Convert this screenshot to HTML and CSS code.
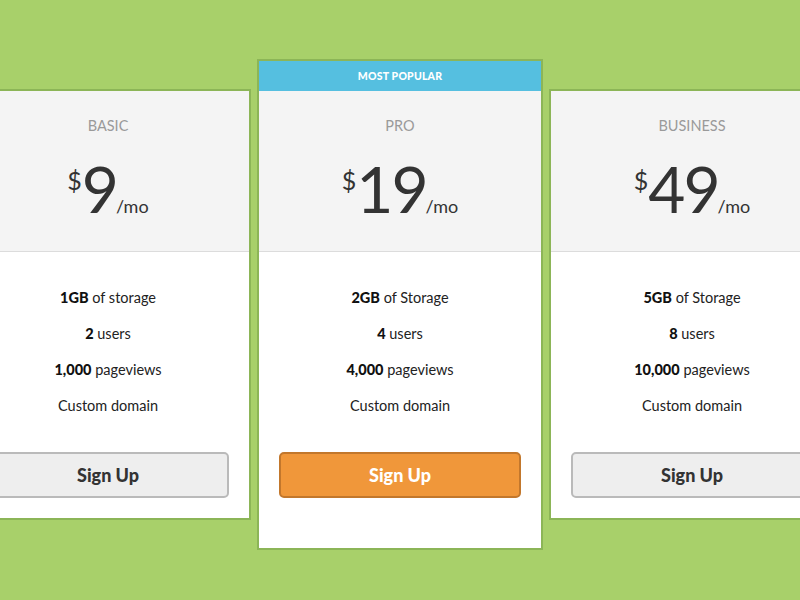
FILE: index.html
```html
<!DOCTYPE html>
<html>
<head>
<meta charset="utf-8">
<link rel="stylesheet" href="styles.css">
</head>
<body>
<div class="plans">
  <div class="card">
    <div class="head">
      <div class="name">BASIC</div>
      <div class="price"><span class="cur">$</span><span class="amt">9</span><span class="per">/mo</span></div>
    </div>
    <div class="body">
      <ul class="features">
        <li><b>1GB</b> of storage</li>
        <li><b>2</b> users</li>
        <li><b>1,000</b> pageviews</li>
        <li>Custom domain</li>
      </ul>
      <button class="btn">Sign Up</button>
    </div>
  </div>
  <div class="card popular">
    <div class="badge">MOST POPULAR</div>
    <div class="head">
      <div class="name">PRO</div>
      <div class="price"><span class="cur">$</span><span class="amt">19</span><span class="per">/mo</span></div>
    </div>
    <div class="body">
      <ul class="features">
        <li><b>2GB</b> of Storage</li>
        <li><b>4</b> users</li>
        <li><b>4,000</b> pageviews</li>
        <li>Custom domain</li>
      </ul>
      <button class="btn primary">Sign Up</button>
    </div>
  </div>
  <div class="card">
    <div class="head">
      <div class="name">BUSINESS</div>
      <div class="price"><span class="cur">$</span><span class="amt">49</span><span class="per">/mo</span></div>
    </div>
    <div class="body">
      <ul class="features">
        <li><b>5GB</b> of Storage</li>
        <li><b>8</b> users</li>
        <li><b>10,000</b> pageviews</li>
        <li>Custom domain</li>
      </ul>
      <button class="btn">Sign Up</button>
    </div>
  </div>
</div>
</body>
</html>
```
FILE: styles.css
```css
html, body {
  margin: 0;
  padding: 0;
  width: 800px;
  height: 600px;
  overflow: hidden;
  background: #a8d06a;
  font-family: Lato, "Open Sans", sans-serif;
}
.plans {
  display: flex;
  justify-content: center;
  align-items: center;
  gap: 6px;
  height: 608px;
}
.card {
  flex: 0 0 286px;
  box-sizing: border-box;
  background: #fff;
  border: 2px solid #8cb557;
  display: flex;
  flex-direction: column;
}
.badge {
  height: 30px;
  background: #55bfe0;
  color: #fff;
  font-weight: 900;
  font-size: 10.5px;
  letter-spacing: 0.2px;
  display: flex;
  align-items: center;
  justify-content: center;
}
.head {
  height: 160px;
  background: #f4f4f4;
  border-bottom: 1px solid #dcdcdc;
  display: flex;
  flex-direction: column;
  align-items: center;
}
.name {
  margin-top: 25px;
  font-size: 14.5px;
  line-height: 20px;
  color: #9a9a9a;
}
.price {
  margin-top: 21px;
  display: flex;
  align-items: baseline;
  color: #333;
}
.cur {
  font-size: 25px;
  align-self: flex-start;
  margin-top: 8px;
  margin-right: 0;
}
.amt {
  font-size: 64px;
  line-height: 64px;
  letter-spacing: -2px;
}
.per {
  font-size: 18px;
  margin-left: -1px;
}
.body {
  padding: 28px 20px 20px;
  display: flex;
  flex-direction: column;
}
.popular .body {
  padding-bottom: 50px;
}
.features {
  list-style: none;
  margin: 0;
  padding: 0;
  text-align: center;
  font-size: 14.5px;
  line-height: 36px;
  color: #222;
}
.features b {
  font-weight: 900;
  color: #111;
}
.btn {
  margin-top: 28px;
  height: 46px;
  border: 2px solid #bababa;
  border-radius: 5px;
  background: #eeeeee;
  color: #333;
  font-family: Lato, "Open Sans", sans-serif;
  font-weight: 900;
  font-size: 18px;
}
.btn.primary {
  background: #f0973a;
  border-color: #c2772c;
  color: #fff;
}
```
